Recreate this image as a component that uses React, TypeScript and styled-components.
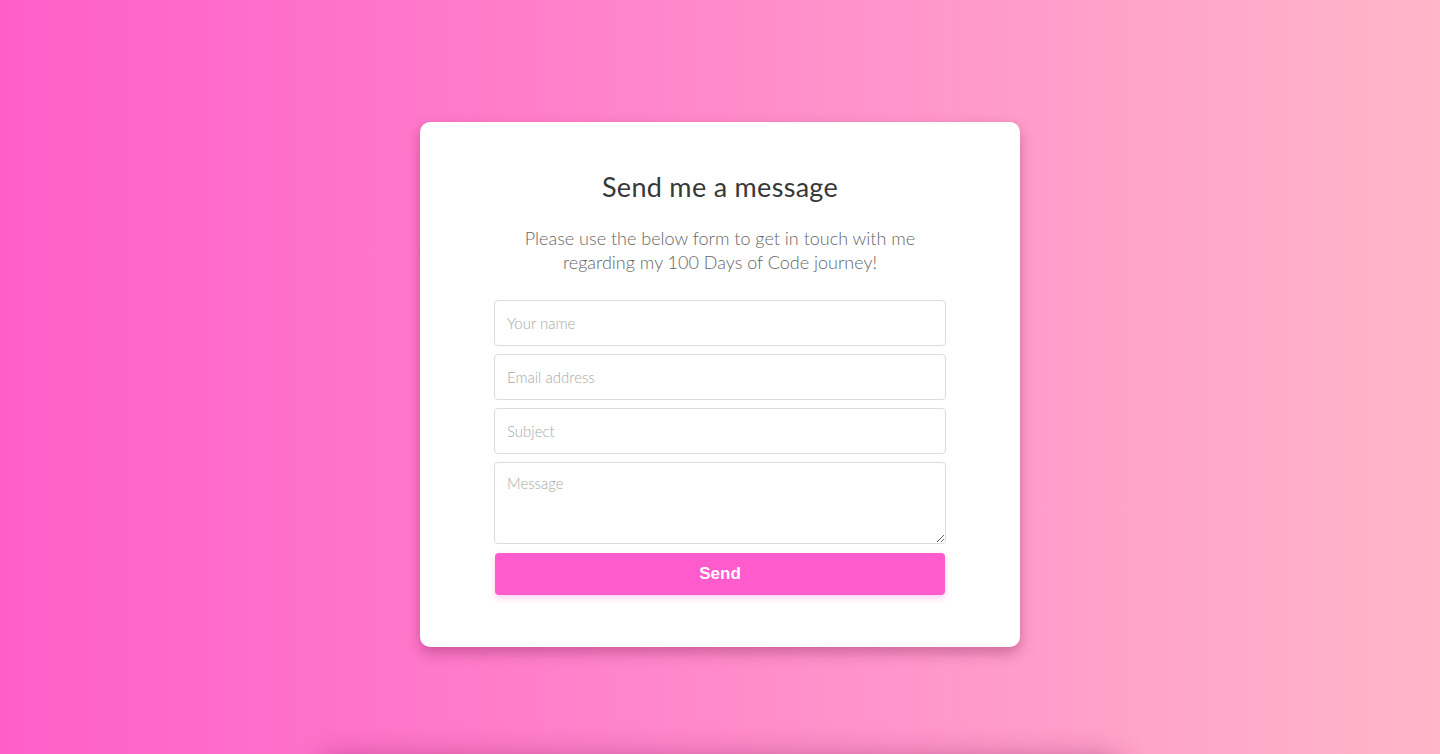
import React from "react";
import styled, { createGlobalStyle } from "styled-components";

const Global = createGlobalStyle`
  html, body { margin: 0; padding: 0; }
  body {
    font-family: "Lato", "Open Sans", sans-serif;
    background: linear-gradient(to right, #ff5ec9 0%, #ff8acb 50%, #ffb6c9 100%);
    min-height: 754px;
    overflow: hidden;
  }
  * { box-sizing: border-box; }
`;

const Page = styled.main`
  min-height: 754px;
  display: flex;
  flex-direction: column;
  align-items: center;
  padding-top: 122px;
`;

const Card = styled.section`
  width: 600px;
  height: 525px;
  background: #fff;
  border-radius: 10px;
  box-shadow: 0 6px 14px rgba(110, 20, 70, 0.35);
  display: flex;
  flex-direction: column;
  align-items: center;
  padding-top: 48px;
`;

const Title = styled.h1`
  margin: 0;
  font-family: "Lato", sans-serif;
  font-weight: 400;
  font-size: 27px;
  line-height: 34px;
  color: #383838;
  letter-spacing: 0.3px;
`;

const Intro = styled.p`
  margin: 22px 0 0;
  width: 440px;
  text-align: center;
  font-weight: 300;
  font-size: 18px;
  line-height: 24px;
  color: #666;
`;

const Form = styled.form`
  margin-top: 26px;
  width: 452px;
  display: flex;
  flex-direction: column;
  gap: 8px;
`;

const Field = styled.input`
  width: 100%;
  height: 46px;
  border: 1px solid #dcdcdc;
  border-radius: 4px;
  padding: 0 12px;
  font-family: "Lato", sans-serif;
  font-weight: 300;
  font-size: 15px;
  color: #444;
  outline: none;
  &::placeholder { color: #a8a8a8; }
`;

const Area = styled.textarea`
  width: 100%;
  height: 82px;
  border: 1px solid #dcdcdc;
  border-radius: 4px;
  padding: 11px 12px;
  font-family: "Lato", sans-serif;
  font-weight: 300;
  font-size: 15px;
  color: #444;
  outline: none;
  resize: vertical;
  display: block;
  &::placeholder { color: #a8a8a8; }
`;

const Send = styled.button`
  margin: 1px 1px 0;
  height: 42px;
  border: none;
  border-radius: 4px;
  background: #ff5bcc;
  color: #fff;
  font-family: "Liberation Sans", Arial, sans-serif;
  font-weight: 700;
  font-size: 17px;
  box-shadow: 0 3px 6px rgba(255, 91, 204, 0.3);
  cursor: pointer;
`;

const Below = styled.div`
  margin-top: 118px;
  width: 800px;
  height: 200px;
  border-radius: 10px;
  box-shadow: 0 -6px 30px rgba(120, 20, 80, 0.45);
`;

export default function App() {
  return (
    <>
      <Global />
      <Page>
        <Card>
          <Title>Send me a message</Title>
          <Intro>
            Please use the below form to get in touch with me regarding my 100 Days of Code journey!
          </Intro>
          <Form onSubmit={(e) => e.preventDefault()}>
            <Field placeholder="Your name" />
            <Field placeholder="Email address" />
            <Field placeholder="Subject" />
            <Area placeholder="Message" />
            <Send type="submit">Send</Send>
          </Form>
        </Card>
        <Below />
      </Page>
    </>
  );
}
